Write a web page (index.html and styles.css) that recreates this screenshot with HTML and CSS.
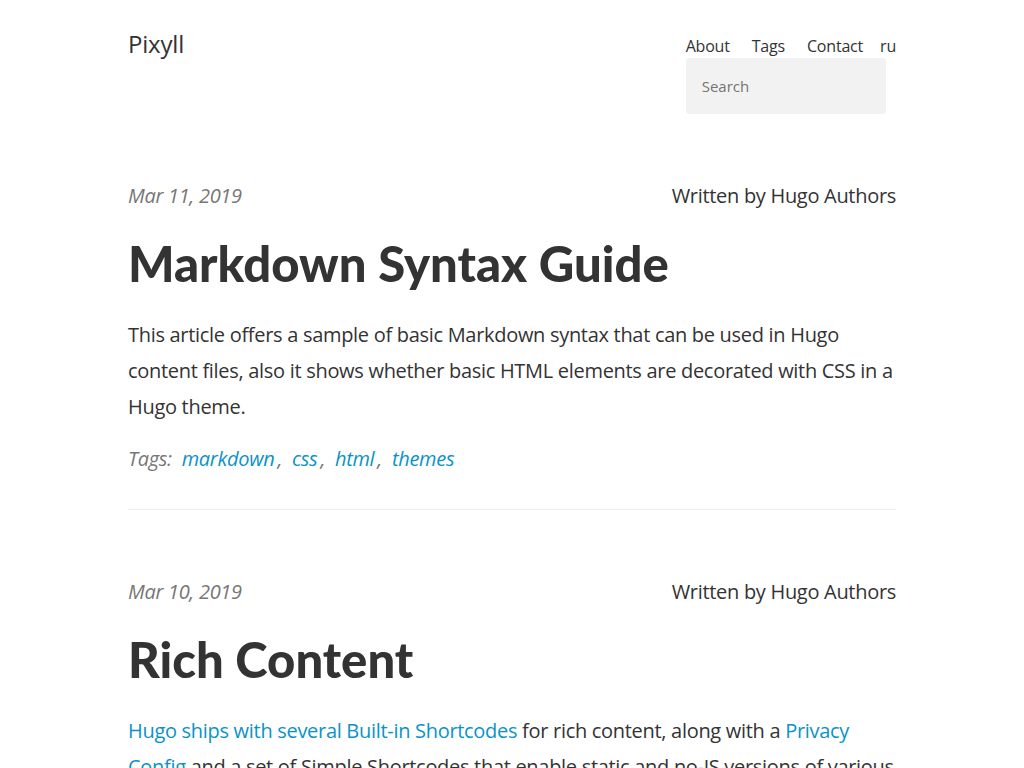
FILE: index.html
```html
<!DOCTYPE html>
<html lang="en">
<head>
<meta charset="utf-8">
<title>Pixyll</title>
<link rel="stylesheet" href="styles.css">
</head>
<body>
<header class="site-header">
  <div class="wrap header-row">
    <a class="site-title" href="#">Pixyll</a>
    <nav class="site-nav">
      <div class="nav-links">
        <a href="#">About</a>
        <a href="#">Tags</a>
        <a href="#">Contact</a>
        <a href="#">ru</a>
      </div>
      <input class="search" type="search" placeholder="Search">
    </nav>
  </div>
</header>
<main class="wrap">
  <article class="post">
    <div class="post-meta">
      <span class="post-date">Mar 11, 2019</span>
      <span class="post-author">Written by Hugo Authors</span>
    </div>
    <h1 class="post-title"><a href="#">Markdown Syntax Guide</a></h1>
    <p class="post-summary">This article offers a sample of basic Markdown syntax that can be used in Hugo content files, also it shows whether basic HTML elements are decorated with CSS in a Hugo theme.</p>
    <p class="post-tags"><span class="tags-label">Tags:</span> <a href="#">markdown</a>, <a href="#">css</a>, <a href="#">html</a>, <a href="#">themes</a></p>
  </article>
  <article class="post">
    <div class="post-meta">
      <span class="post-date">Mar 10, 2019</span>
      <span class="post-author">Written by Hugo Authors</span>
    </div>
    <h1 class="post-title"><a href="#">Rich Content</a></h1>
    <p class="post-summary"><a href="#">Hugo ships with several Built-in Shortcodes</a> for rich content, along with a <a href="#">Privacy Config</a> and a set of Simple Shortcodes that enable static and no-JS versions of various social media embeds.</p>
  </article>
</main>
</body>
</html>
```
FILE: styles.css
```css
html, body {
  margin: 0;
  padding: 0;
  background: #fff;
}
body {
  font-family: "Open Sans", "Noto Sans", sans-serif;
  font-size: 20px;
  line-height: 1.8;
  letter-spacing: -0.3px;
  color: #333;
}
a {
  text-decoration: none;
  color: #0a93c9;
}
.wrap {
  width: 768px;
  margin: 0 auto;
}
.site-header {
  padding-top: 28px;
}
.header-row {
  display: flex;
  justify-content: space-between;
  align-items: flex-start;
}
.site-title {
  color: #333;
  font-size: 24px;
  line-height: 32px;
  letter-spacing: -0.2px;
}
.site-nav {
  display: flex;
  flex-direction: column;
  align-items: flex-end;
  padding-top: 6px;
}
.nav-links {
  display: flex;
  gap: 22px;
  font-size: 16px;
  line-height: 24px;
  letter-spacing: -0.2px;
}
.nav-links a {
  color: #333;
}
.nav-links a:last-child {
  margin-left: -5px;
}
.search {
  align-self: flex-start;
  width: 200px;
  height: 56px;
  box-sizing: border-box;
  border: 0;
  border-radius: 3px;
  background: #f2f2f2;
  padding: 0 16px;
  margin: 0;
  font-family: inherit;
  font-size: 15px;
  color: #333;
  outline: none;
}
.search::placeholder {
  color: #757575;
}
.post {
  padding-top: 64px;
  padding-bottom: 32px;
  border-bottom: 1px solid #eee;
}
.post:last-child {
  border-bottom: 0;
}
.post-meta {
  display: flex;
  justify-content: space-between;
  line-height: 36px;
}
.post-date {
  font-style: italic;
  color: #777;
}
.post-title {
  font-family: "Lato Black", "Lato", sans-serif;
  font-weight: 900;
  font-size: 49px;
  line-height: 1.2;
  letter-spacing: 0;
  margin: 20px 0 24px;
}
.post-title a {
  color: #333;
}
.post-summary {
  margin: 0;
}
.post-tags {
  margin: 16px 0 0;
  font-style: italic;
  color: #777;
}
.post-tags a {
  margin-left: 5px;
  margin-right: 3px;
}
```
